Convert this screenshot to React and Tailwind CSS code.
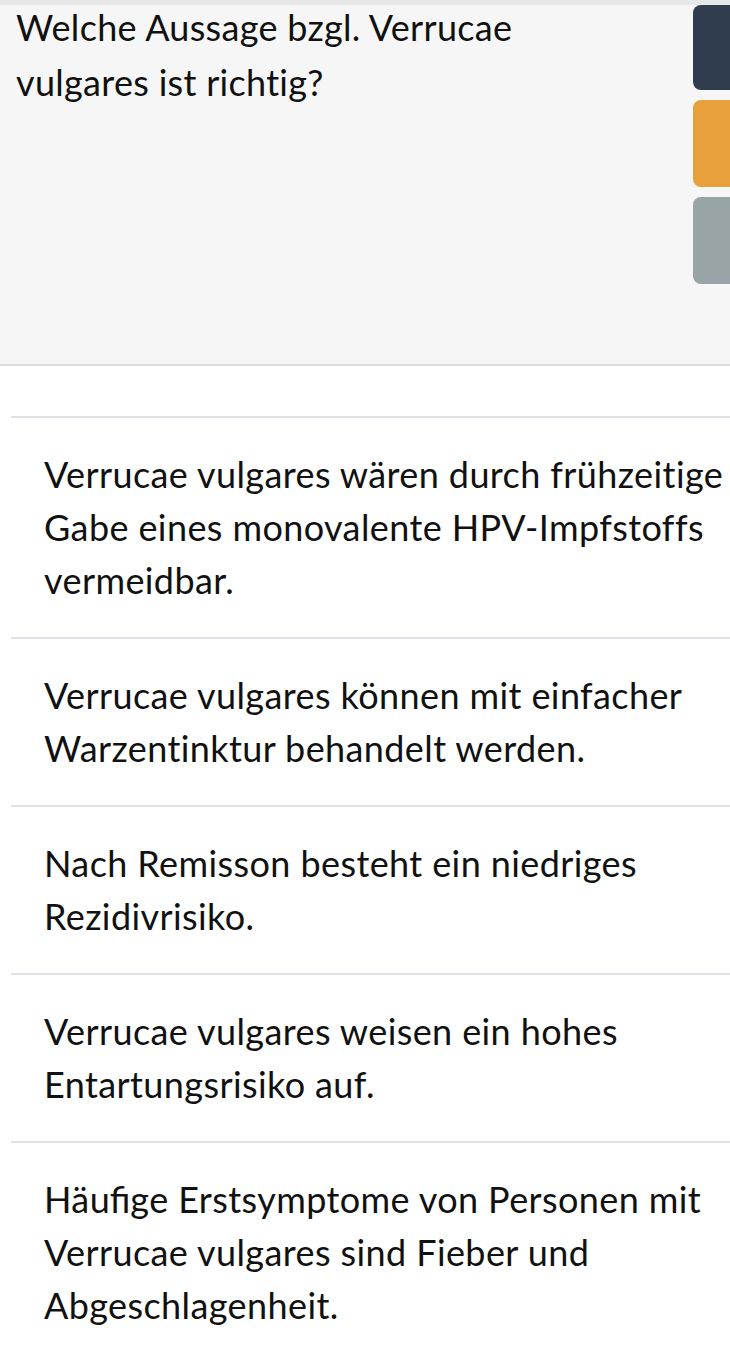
export default function App() {
  const options = [
    "Verrucae vulgares wären durch frühzeitige Gabe eines monovalente HPV-Impfstoffs vermeidbar.",
    "Verrucae vulgares können mit einfacher Warzentinktur behandelt werden.",
    "Nach Remisson besteht ein niedriges Rezidivrisiko.",
    "Verrucae vulgares weisen ein hohes Entartungsrisiko auf.",
    null,
  ];
  return (
    <div className="w-[730px] min-h-[1356px] bg-white overflow-hidden text-[#111] font-['Lato','Liberation_Sans',sans-serif] [font-variant-ligatures:no-common-ligatures]">
      <div className="h-[5px] bg-[#e6e7e9]" />
      <div className="flex h-[361px] bg-[#f6f6f6] border-b-2 border-[#dadada]">
        <div className="flex-1 mt-[-5px] pl-[16px] pr-[60px] text-[36px] leading-[55px] tracking-[0.3px]">
          Welche Aussage bzgl. Verrucae vulgares ist richtig?
        </div>
        <div className="w-[37px] shrink-0 flex flex-col gap-[10px]">
          <div className="h-[85px] rounded-l-[8px] bg-[#2f3d4e]" />
          <div className="h-[87px] rounded-l-[8px] bg-[#e8a03c]" />
          <div className="h-[87px] rounded-l-[8px] bg-[#98a4a6]" />
        </div>
      </div>
      <div className="h-[50px]" />
      <div className="ml-[11px]">
        {options.map((o, i) => (
          <div
            key={i}
            className="border-t-2 border-[#e0e0e6] pl-[33px] pr-[2px] py-[30px] text-[36px] leading-[53px] tracking-[0.4px]"
          >
            {o === null ? (
              <>
                Hä<span className="tracking-normal [font-variant-ligatures:common-ligatures]">ufi</span>ge Erstsymptome von Personen mit Verrucae vulgares sind Fieber und Abgeschlagenheit.
              </>
            ) : (
              o
            )}
          </div>
        ))}
      </div>
    </div>
  );
}
